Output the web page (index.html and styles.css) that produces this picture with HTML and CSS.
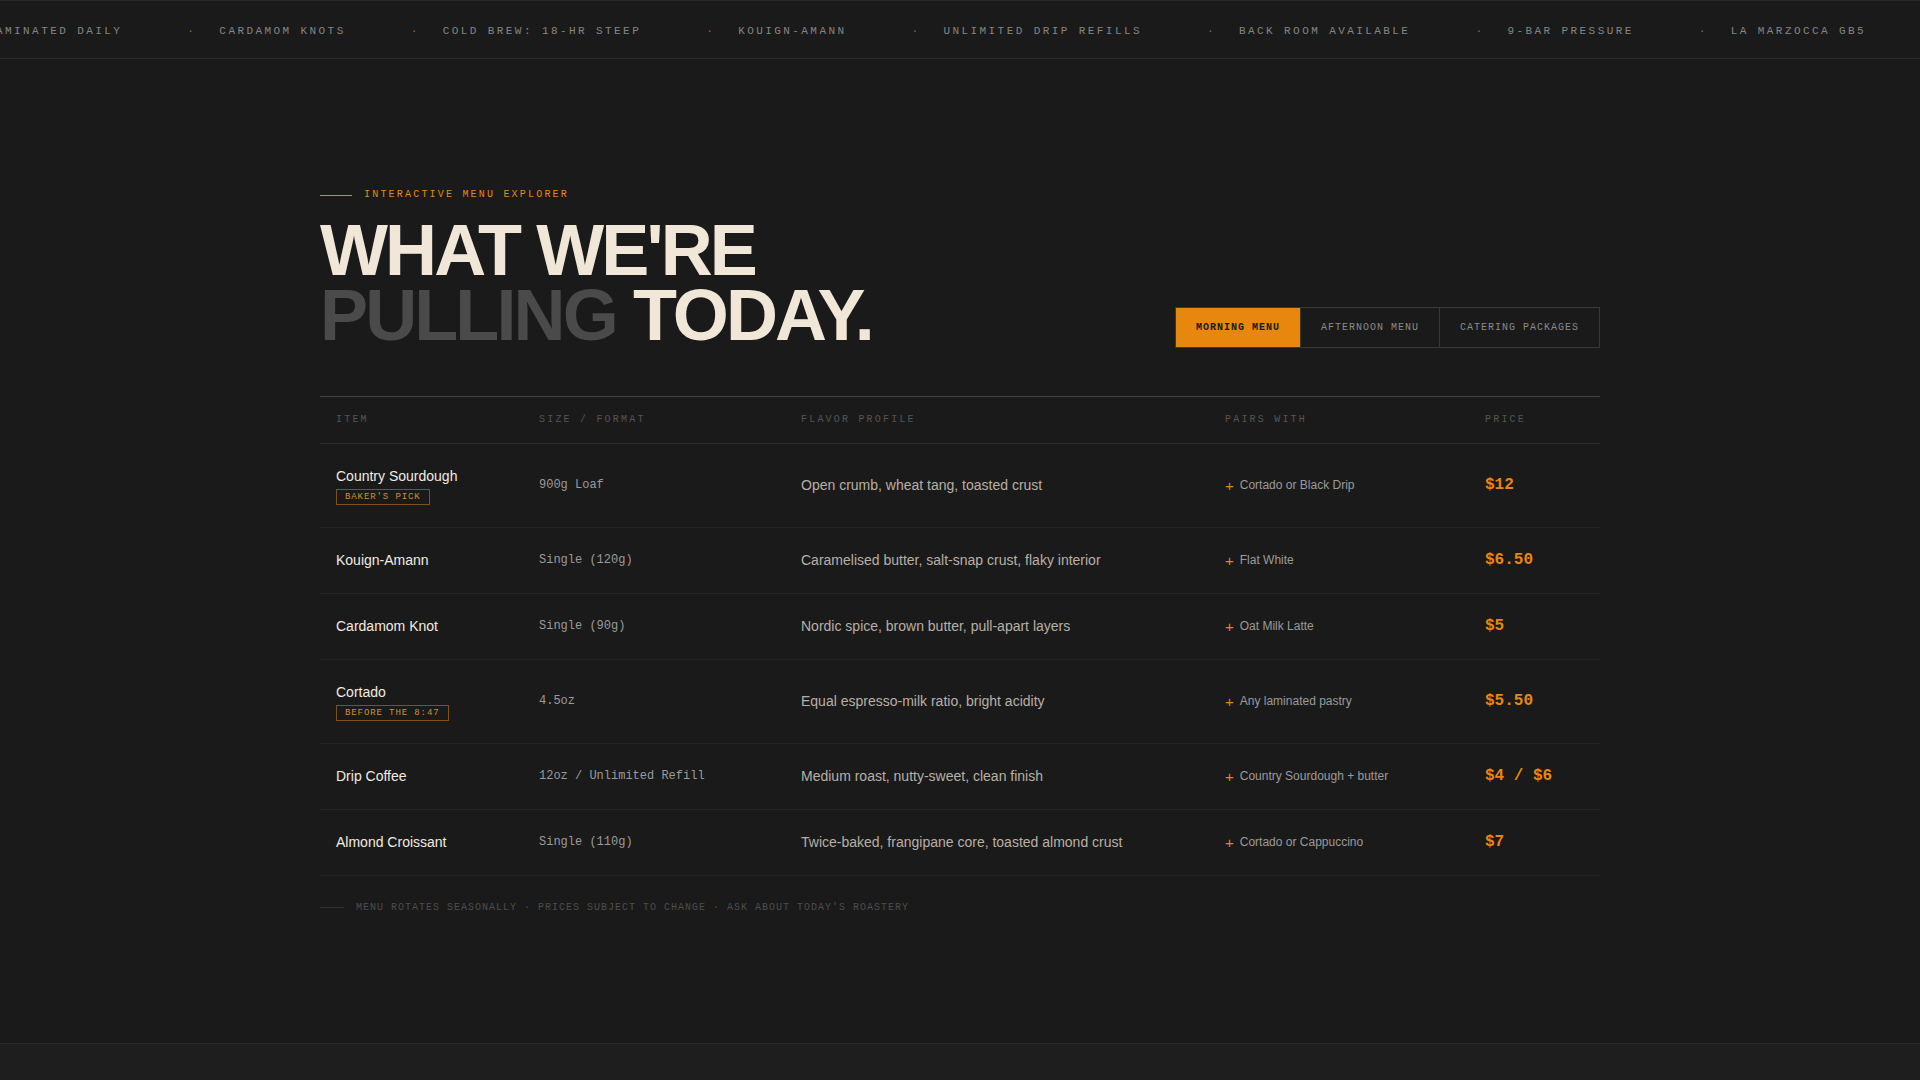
FILE: index.html
```html
<!DOCTYPE html>
<html lang="en">
<head>
<meta charset="utf-8">
<title>What We're Pulling Today</title>
<link rel="stylesheet" href="styles.css">
</head>
<body>
<div class="ticker">
  <div class="track">
    <span class="t">Laminated daily</span><span class="d">·</span>
    <span class="t">Cardamom knots</span><span class="d">·</span>
    <span class="t">Cold brew: 18-hr steep</span><span class="d">·</span>
    <span class="t">Kouign-amann</span><span class="d">·</span>
    <span class="t">Unlimited drip refills</span><span class="d">·</span>
    <span class="t">Back room available</span><span class="d">·</span>
    <span class="t">9-bar pressure</span><span class="d">·</span>
    <span class="t">La Marzocca GB5</span><span class="d">·</span>
    <span class="t">Laminated daily</span><span class="d">·</span>
  </div>
</div>

<main class="main">
  <div class="wrap">
    <header class="head">
      <div class="head-left">
        <div class="eyebrow"><span class="rule"></span>Interactive Menu Explorer</div>
        <h1 class="title">What we're<br><span class="dim">Pulling</span> today.</h1>
      </div>
      <div class="tabs">
        <button class="tab active">Morning Menu</button>
        <button class="tab">Afternoon Menu</button>
        <button class="tab">Catering Packages</button>
      </div>
    </header>

    <div class="menu">
      <div class="row row-head">
        <div>Item</div>
        <div>Size / Format</div>
        <div>Flavor Profile</div>
        <div>Pairs With</div>
        <div>Price</div>
      </div>

      <div class="row">
        <div><div class="name">Country Sourdough</div><span class="badge">Baker's Pick</span></div>
        <div class="size">900g Loaf</div>
        <div class="flavor">Open crumb, wheat tang, toasted crust</div>
        <div class="pairs"><span class="plus">+</span>Cortado or Black Drip</div>
        <div class="price">$12</div>
      </div>

      <div class="row">
        <div><div class="name">Kouign-Amann</div></div>
        <div class="size">Single (120g)</div>
        <div class="flavor">Caramelised butter, salt-snap crust, flaky interior</div>
        <div class="pairs"><span class="plus">+</span>Flat White</div>
        <div class="price">$6.50</div>
      </div>

      <div class="row">
        <div><div class="name">Cardamom Knot</div></div>
        <div class="size">Single (90g)</div>
        <div class="flavor">Nordic spice, brown butter, pull-apart layers</div>
        <div class="pairs"><span class="plus">+</span>Oat Milk Latte</div>
        <div class="price">$5</div>
      </div>

      <div class="row">
        <div><div class="name">Cortado</div><span class="badge">Before the 8:47</span></div>
        <div class="size">4.5oz</div>
        <div class="flavor">Equal espresso-milk ratio, bright acidity</div>
        <div class="pairs"><span class="plus">+</span>Any laminated pastry</div>
        <div class="price">$5.50</div>
      </div>

      <div class="row">
        <div><div class="name">Drip Coffee</div></div>
        <div class="size">12oz / Unlimited Refill</div>
        <div class="flavor">Medium roast, nutty-sweet, clean finish</div>
        <div class="pairs"><span class="plus">+</span>Country Sourdough + butter</div>
        <div class="price">$4 / $6</div>
      </div>

      <div class="row">
        <div><div class="name">Almond Croissant</div></div>
        <div class="size">Single (110g)</div>
        <div class="flavor">Twice-baked, frangipane core, toasted almond crust</div>
        <div class="pairs"><span class="plus">+</span>Cortado or Cappuccino</div>
        <div class="price">$7</div>
      </div>
    </div>

    <p class="note"><span class="rule"></span>Menu rotates seasonally · Prices subject to change · Ask about today's roastery</p>
  </div>
</main>

<footer class="foot"></footer>
</body>
</html>
```

FILE: styles.css
```css
* { box-sizing: border-box; }

html, body {
  margin: 0;
  background: #1a1a1a;
}

body {
  font-family: "Liberation Sans", Arial, sans-serif;
  color: #f0e7d8;
}

/* ticker */
.ticker {
  border-top: 1px solid #2a2a2a;
  border-bottom: 1px solid #2a2a2a;
  overflow: hidden;
  white-space: nowrap;
  padding: 23px 0 19px;
  font-family: "Liberation Mono", monospace;
  font-size: 11px;
  line-height: 15px;
  letter-spacing: 0.22em;
  color: #858585;
  text-transform: uppercase;
}

.track {
  display: flex;
  margin-left: -13px;
}

.track span { flex: none; }

.track .t { margin-right: 65px; }

.track .d {
  margin-right: 23px;
  color: #9a6418;
}

/* main */
.main {
  padding: 129px 0 128px;
}

.wrap {
  width: 1280px;
  margin: 0 auto;
}

.head {
  display: flex;
  justify-content: space-between;
  align-items: flex-end;
}

.eyebrow {
  display: flex;
  align-items: center;
  gap: 12px;
  font-family: "Liberation Mono", monospace;
  font-size: 10px;
  line-height: 14px;
  letter-spacing: 0.22em;
  color: #e8870e;
  text-transform: uppercase;
  margin-bottom: 16px;
}

.eyebrow .rule {
  display: block;
  width: 32px;
  height: 1px;
  background: #e8870e;
}

.title {
  margin: 0;
  font-size: 72px;
  line-height: 0.9;
  font-weight: 700;
  letter-spacing: -0.04em;
  color: #f0e7d8;
  text-transform: uppercase;
}

.title .dim { color: #4a4a4a; }

.tabs {
  display: flex;
  border: 1px solid #383838;
}

.tab {
  height: 39px;
  padding: 0 20px;
  border: 0;
  border-left: 1px solid #383838;
  background: transparent;
  font-family: "Liberation Mono", monospace;
  font-size: 10px;
  letter-spacing: 0.1em;
  text-transform: uppercase;
  color: #8a8a8a;
  cursor: pointer;
}

.tab:first-child { border-left: 0; }

.tab.active {
  background: #e8870e;
  color: #1a1a1a;
  font-weight: 700;
}

/* menu table */
.menu {
  margin-top: 48px;
  border-top: 1px solid #444;
}

.row {
  display: grid;
  grid-template-columns: 203px 262px 424px 260px 131px;
  align-items: center;
  border-bottom: 1px solid #252525;
}

.row > div {
  padding: 22px 16px;
}

.row-head {
  border-bottom-color: #2c2c2c;
}

.row-head > div {
  padding: 16px;
  font-family: "Liberation Mono", monospace;
  font-size: 10px;
  line-height: 14px;
  letter-spacing: 0.22em;
  text-transform: uppercase;
  color: #555;
}

.name {
  font-size: 14px;
  line-height: 21px;
  color: #f2ebe0;
}

.badge {
  display: block;
  width: fit-content;
  margin-top: 2px;
  padding: 1px 8px;
  border: 1px solid rgba(232, 135, 14, 0.5);
  font-family: "Liberation Mono", monospace;
  font-size: 9px;
  line-height: 12px;
  letter-spacing: 0.1em;
  text-transform: uppercase;
  color: #d98a2b;
}

.size {
  font-family: "Liberation Mono", monospace;
  font-size: 12px;
  line-height: 21px;
  color: #9a9a9a;
}

.flavor {
  font-size: 14px;
  line-height: 21px;
  color: #b8b0a6;
}

.pairs {
  display: flex;
  align-items: center;
  font-size: 12px;
  line-height: 21px;
  color: #9a9a9a;
}

.plus {
  color: #e8870e;
  font-size: 15px;
  line-height: 21px;
  margin-right: 6px;
}

.price {
  font-family: "Liberation Mono", monospace;
  font-size: 16px;
  line-height: 21px;
  font-weight: 700;
  color: #e8870e;
}

.note {
  margin: 24px 0 0;
  display: flex;
  align-items: center;
  gap: 12px;
  font-family: "Liberation Mono", monospace;
  font-size: 10px;
  line-height: 15px;
  letter-spacing: 0.1em;
  text-transform: uppercase;
  color: #4d4d4d;
}

.note .rule {
  display: block;
  width: 24px;
  height: 1px;
  background: #333;
}

.foot {
  border-top: 1px solid #2a2a2a;
  background: #1e1e1e;
  height: 80px;
}
```
